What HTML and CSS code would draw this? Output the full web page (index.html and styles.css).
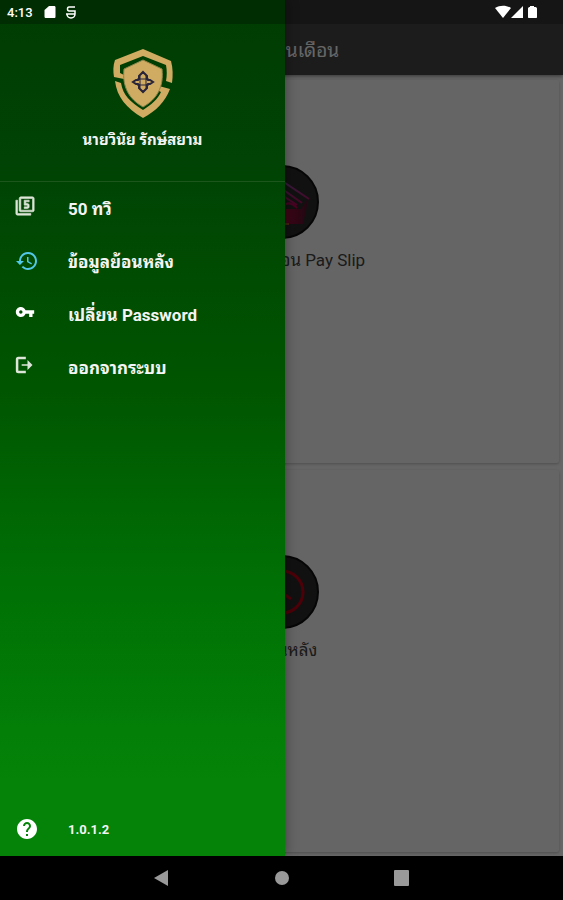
FILE: index.html
```html
<!DOCTYPE html>
<html lang="th">
<head>
  <meta charset="utf-8">
  <meta name="viewport" content="width=device-width, initial-scale=1">
  <title>สลิปเงินเดือน</title>
  <link rel="stylesheet" href="styles.css">
</head>
<body>
  <div class="screen">
    <header class="app-bar">
      <h1>ดูสลิปเงินเดือน</h1>
    </header>

    <main class="cards">
      <a class="card" href="#payslip">
        <svg class="card-icon" viewBox="0 0 74 74">
          <defs>
            <linearGradient id="slip" x1="0" y1="0" x2="0" y2="1">
              <stop offset="0" stop-color="#8a4aa6"/>
              <stop offset="1" stop-color="#b80048"/>
            </linearGradient>
            <linearGradient id="slip-fill" x1="0" y1="0" x2="1" y2="0">
              <stop offset="0.500" stop-color="#a80c3c"/>
              <stop offset="1" stop-color="#4c142c"/>
            </linearGradient>
          </defs>
          <circle cx="37" cy="37" r="36" fill="#2c2c2c" stroke="#111" stroke-width="2"/>
          <path d="M12 44h44l8-12-6 27H12z" fill="url(#slip-fill)"/>
          <path d="M18 28L37 16l27 18M24 30l13-6 20 14M30 36l8-5 14 9M38 41c4-4 9-3 14 2" fill="none" stroke="url(#slip)" stroke-width="2"/>
          <path d="M36 59h8" stroke="#a85530" stroke-width="2"/>
        </svg>
        <span>ดูสลิปเงินเดือน Pay Slip</span>
      </a>
      <a class="card" href="#history">
        <svg class="card-icon" viewBox="0 0 74 74">
          <circle cx="37" cy="37" r="36" fill="#2c2c2c" stroke="#111" stroke-width="2"/>
          <g fill="none" stroke="#c00014" stroke-width="3">
            <circle cx="37" cy="37" r="21"/>
            <path d="M33 23v12l13 9"/>
          </g>
        </svg>
        <span>ดูย้อนหลัง</span>
      </a>
    </main>

    <div class="scrim"></div>

    <aside class="drawer">
      <div class="profile">
        <svg class="logo" viewBox="0 0 60 70">
          <g fill="#d0ab62">
            <path d="M30 0L58 12C60 19 60 27 59 34L53 32C54 27 54 21 53 16L30 7L7 16V24L11 26V30L1 28C0 22 0 17 2 11Z"/>
            <path d="M2 32L8 34C10 46 17 53 30 61C38 56 45 50 48 43L44 41L46 37L57 40C52 53 43 62 30 69C13 59 4 48 2 32Z"/>
            <path d="M30 11L49 20C51 38 44 50 30 58C16 50 9 38 11 20Z" stroke="#8f8449"/>
          </g>
          <g fill="none" stroke="#29243a" stroke-width="2">
            <path d="M30 23l4 4v3l1 1h2l3 2-3 2h-2l-1 1v3l-4 4-4-4v-3l-1-1h-2l-3-2 3-2h2l1-1v-3z"/>
            <path d="M27 27v12M33 27v12M24 30h12M24 36h12" stroke-width="1"/>
          </g>
        </svg>
        <p class="name">นายวินัย รักษ์สยาม</p>
      </div>

      <nav class="menu">
        <a class="item" href="#tawi50">
          <svg class="icon light" viewBox="0 0 24 24"><path d="M21 1H7c-1.100 0-2 .9-2 2v14c0 1.100.9 2 2 2h14c1.100 0 2-.9 2-2V3c0-1.100-.9-2-2-2zm0 16H7V3h14v14zM3 5H1v16c0 1.100.9 2 2 2h16v-2H3V5zm14 8v-2c0-1.100-.9-2-2-2h-2V7h4V5h-6v6h4v2h-4v2h4c1.100 0 2-.9 2-2z" stroke="#dde5d8" stroke-width=".7"/></svg>
          <span>50 ทวิ</span>
        </a>
        <a class="item" href="#history">
          <svg class="icon large blue" viewBox="0 0 24 24"><path d="M13 3c-4.970 0-9 4.030-9 9H1l3.890 3.890.07.14L9 12H6c0-3.870 3.130-7 7-7s7 3.130 7 7-3.130 7-7 7c-1.930 0-3.680-.79-4.940-2.060l-1.420 1.420C8.270 19.990 10.510 21 13 21c4.970 0 9-4.030 9-9s-4.030-9-9-9zm-1 5v5l4.280 2.540.72-1.210-3.500-2.080V8H12z"/></svg>
          <span>ข้อมูลย้อนหลัง</span>
        </a>
        <a class="item" href="#password">
          <svg class="icon" viewBox="0 0 24 24"><path d="M12.650 10C11.830 7.670 9.610 6 7 6c-3.310 0-6 2.690-6 6s2.690 6 6 6c2.610 0 4.830-1.670 5.650-4H17v4h4v-4h2v-4H12.650zM7 14c-1.100 0-2-.9-2-2s.9-2 2-2 2 .9 2 2-.9 2-2 2z"/></svg>
          <span>เปลี่ยน Password</span>
        </a>
        <a class="item" href="#logout">
          <svg class="icon light" viewBox="0 0 24 24"><path d="M13 2v3H4v14h9v3H4c-2 0-3-1-3-3V5c0-2 1-3 3-3zM15 6l6 6-6 6v-5H8v-2h7z"/></svg>
          <span>ออกจากระบบ</span>
        </a>
      </nav>

      <div class="version">
        <svg class="icon large" viewBox="0 0 24 24"><path d="M12 2C6.480 2 2 6.480 2 12s4.480 10 10 10 10-4.480 10-10S17.520 2 12 2zm1 17h-2v-2h2v2zm2.070-7.750l-.9.920C13.450 12.900 13 13.500 13 15h-2v-.5c0-1.100.45-2.100 1.170-2.830l1.240-1.260c.37-.36.59-.86.59-1.410 0-1.100-.9-2-2-2s-2 .9-2 2H8c0-2.210 1.790-4 4-4s4 1.790 4 4c0 .88-.36 1.680-.93 2.250z"/></svg>
        <span>1.0.1.2</span>
      </div>
    </aside>

    <div class="status-bar">
      <span class="time">4:13</span>
      <svg class="status-icon" viewBox="0 0 12 14"><path d="M5 1h5c1 0 1.500.5 1.500 1.500v9c0 1-.5 1.500-1.500 1.500H2c-1 0-1.500-.5-1.500-1.500V5z"/></svg>
      <svg class="status-icon debug" viewBox="0 0 12 14"><path d="M10 2H4C2 2 2 6 4 6h6v3c0 2-1.500 4-4 4s-4-2-4-4M1 9h9" fill="none" stroke="#fff" stroke-width="1.500"/></svg>
      <svg class="signals" viewBox="0 0 44 14">
        <path d="M0 3C5 0 11 0 16 3L8 13z"/>
        <path d="M28 1v12H16z"/>
        <path d="M35 1h4v1h1c1 0 2 .5 2 1.500V12c0 .7-.3 1-1 1h-7c-.7 0-1-.3-1-1V3.500c0-1 1-1.500 2-1.500z"/>
      </svg>
    </div>
  </div>

  <div class="nav-bar">
    <button type="button" aria-label="Back"><svg viewBox="0 0 16 16"><path d="M14 0v16L0 8z"/></svg></button>
    <button type="button" aria-label="Home"><svg viewBox="0 0 16 16"><circle cx="8" cy="8" r="7"/></svg></button>
    <button type="button" aria-label="Recents"><svg viewBox="0 0 16 16"><rect width="15" height="16" rx="1"/></svg></button>
  </div>
</body>
</html>
```
FILE: styles.css
```css
* {
  margin: 0;
  padding: 0;
  box-sizing: border-box;
}

body {
  min-height: 100vh;
  display: flex;
  flex-direction: column;
  font-family: Roboto, "Noto Sans Thai Looped", "Noto Sans", sans-serif;
  background: #000;
}

a {
  color: inherit;
  text-decoration: none;
}

svg {
  display: block;
  flex-shrink: 0;
}

.screen {
  position: relative;
  flex: 1;
  display: flex;
  flex-direction: column;
  overflow: hidden;
  background: #fff;
}

/* page under the drawer */
.app-bar {
  padding: 24px 16px 2px;
  height: 75px;
  display: flex;
  align-items: center;
  justify-content: center;
  background: #464646;
  color: #fff;
  box-shadow: 0 1px 4px rgba(0, 0, 0, 0.5);
}

.app-bar h1 {
  font-size: 19px;
  font-weight: 400;
}

.cards {
  flex: 1;
  display: flex;
  flex-direction: column;
  gap: 7px;
  padding: 5px 4px 4px;
}

.card {
  flex: 1;
  display: flex;
  flex-direction: column;
  align-items: center;
  gap: 9px;
  padding-top: 85px;
  border-radius: 2px;
  background: #fcfcfc;
  box-shadow: 0 1px 3px rgba(0, 0, 0, 0.25);
  color: #444;
  font-size: 17px;
  line-height: 24px;
}

.card-icon {
  width: 74px;
  height: 74px;
}

.scrim {
  position: absolute;
  inset: 0;
  background: rgba(0, 0, 0, 0.6);
}

/* drawer */
.drawer {
  position: absolute;
  top: 0;
  bottom: 0;
  left: 0;
  width: 285px;
  display: flex;
  flex-direction: column;
  background: linear-gradient(#003c03, #004404 21%, #005500 45%, #007205 70%, #048308 91%);
  box-shadow: 0 0 12px rgba(0, 0, 0, 0.4);
  color: #f4f4f4;
  font-weight: 700;
}

.profile {
  height: 182px;
  padding-top: 49px;
  display: flex;
  flex-direction: column;
  align-items: center;
  gap: 10px;
  border-bottom: 1px solid #1c561c;
}

.logo {
  width: 60px;
  height: 70px;
}

.name {
  font-size: 15px;
  line-height: 22px;
}

.item {
  display: flex;
  align-items: center;
  gap: 29px;
  height: 53px;
  padding: 0 15px 2px;
  font-size: 17px;
}

.icon {
  width: 20px;
  height: 20px;
  margin: 0 4px 4px 0;
  fill: #fff;
}

.icon.large {
  width: 24px;
  height: 24px;
  margin: 0;
}

.icon.light {
  fill: #dde5d8;
}

.icon.blue {
  fill: #52c8e8;
}

.version {
  display: flex;
  align-items: center;
  gap: 29px;
  margin-top: auto;
  padding: 15px;
  font-size: 13px;
}

/* system bars */
.status-bar {
  position: absolute;
  top: 0;
  left: 0;
  right: 0;
  height: 24px;
  display: flex;
  align-items: center;
  padding: 0 24px 0 7px;
  background: rgba(0, 0, 0, 0.25);
  color: #fff;
  fill: #fff;
}

.time {
  margin-right: 11px;
  font-size: 13px;
  font-weight: 500;
}

.status-icon {
  width: 12px;
  height: 14px;
}

.debug {
  margin-left: 9px;
}

.signals {
  width: 44px;
  height: 14px;
  margin-left: auto;
}

.nav-bar {
  height: 44px;
  display: flex;
  align-items: center;
  justify-content: center;
  gap: 72px;
}

.nav-bar button {
  padding: 16px;
  border: 0;
  background: none;
  fill: #999;
}

.nav-bar svg {
  width: 16px;
  height: 16px;
}
```
